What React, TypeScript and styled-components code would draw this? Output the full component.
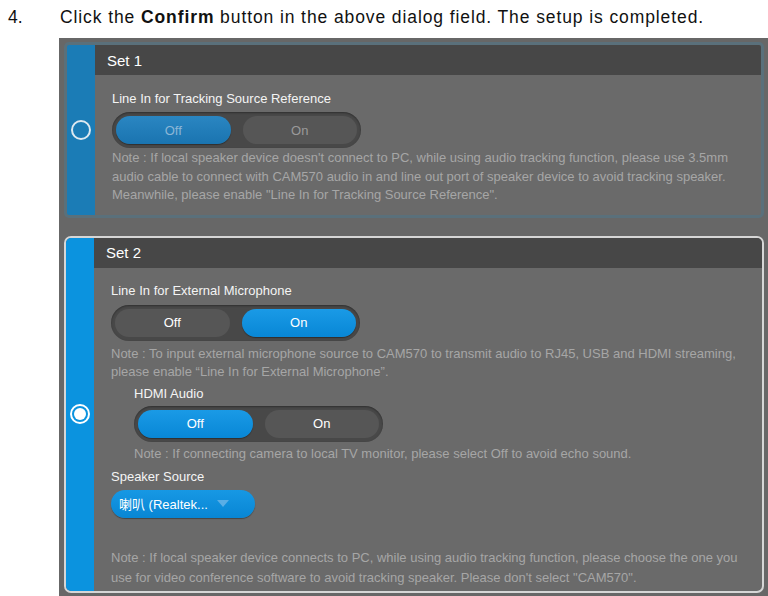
import React from "react";
import styled, { createGlobalStyle } from "styled-components";

const Global = createGlobalStyle`
  html, body { margin: 0; padding: 0; background: #ffffff; }
  body { font-family: "Liberation Sans", Arial, sans-serif; overflow: hidden; width: 768px; height: 596px; }
`;

const Page = styled.div`
  width: 768px;
  height: 596px;
  overflow: hidden;
`;

const StepRow = styled.div`
  display: flex;
  align-items: center;
  height: 20px;
  padding-top: 7px;
  font-size: 17.5px;
  letter-spacing: 0.9px;
  color: #111;
  white-space: nowrap;
`;

const StepNum = styled.span`
  width: 60px;
  padding-left: 8px;
  box-sizing: border-box;
  letter-spacing: 0;
`;

const Frame = styled.div`
  margin-top: 11px;
  margin-left: 59px;
  width: 720px;
  height: 570px;
  background: #676767;
  padding: 4px 0 0 5px;
  box-sizing: border-box;
  display: flex;
  flex-direction: column;
  align-items: flex-start;
  gap: 18px;
`;

const Card = styled.div<{ $active: boolean }>`
  width: 700px;
  display: flex;
  box-sizing: border-box;
  border: ${(p) => (p.$active ? "2px solid #d6d6d6" : "3px solid #5a707b")};
  border-radius: ${(p) => (p.$active ? "7px" : "5px")};
  overflow: hidden;
  background: #6a6a6a;
`;

const Strip = styled.div<{ $active: boolean }>`
  width: 28px;
  flex: none;
  background: ${(p) => (p.$active ? "#0b93df" : "#1b7cb6")};
  display: flex;
  align-items: center;
  justify-content: center;
`;

const Radio = styled.div<{ $checked: boolean }>`
  width: 20px;
  height: 20px;
  box-sizing: border-box;
  border-radius: 50%;
  border: 2px solid ${(p) => (p.$checked ? "#ffffff" : "#dce8f0")};
  display: flex;
  align-items: center;
  justify-content: center;
  &::after {
    content: "";
    display: ${(p) => (p.$checked ? "block" : "none")};
    width: 12px;
    height: 12px;
    border-radius: 50%;
    background: #ffffff;
  }
`;

const Content = styled.div`
  flex: 1;
  display: flex;
  flex-direction: column;
`;

const Header = styled.div`
  height: 30px;
  background: #474747;
  color: #ffffff;
  font-size: 15px;
  display: flex;
  align-items: center;
  padding-left: 12px;
`;

const Body = styled.div<{ $pt: number; $pb: number }>`
  padding: ${(p) => p.$pt}px 10px ${(p) => p.$pb}px 17px;
  display: flex;
  flex-direction: column;
  align-items: flex-start;
`;

const Label = styled.div<{ $indent?: number; $mt?: number }>`
  font-size: 13px;
  line-height: 16px;
  color: #f4f4f4;
  margin-top: ${(p) => p.$mt ?? 0}px;
  margin-left: ${(p) => p.$indent ?? 0}px;
`;

const Toggle = styled.div<{ $indent?: number; $mt: number }>`
  margin-top: ${(p) => p.$mt}px;
  margin-left: ${(p) => p.$indent ?? 0}px;
  width: 249px;
  height: 36px;
  box-sizing: border-box;
  padding: 4px;
  background: #484848;
  border-radius: 18px;
  display: flex;
  gap: 12px;
  box-shadow: inset 0 1px 2px rgba(0, 0, 0, 0.35);
`;

const ToggleBtn = styled.div<{ $on: boolean; $dim?: boolean }>`
  flex: 1;
  border-radius: 14px;
  display: flex;
  align-items: center;
  justify-content: center;
  font-size: 13px;
  background: ${(p) =>
    p.$on
      ? p.$dim
        ? "linear-gradient(#2a86c2, #1a74b0)"
        : "linear-gradient(#1a9ae6, #0887d6)"
      : "#565656"};
  color: ${(p) => (p.$dim ? (p.$on ? "#8cb6d6" : "#9a9a9a") : "#ffffff")};
  box-shadow: ${(p) => (p.$on ? "0 1px 1px rgba(0,0,0,0.35)" : "none")};
`;

const Note = styled.div<{ $indent?: number; $mt: number; $lh: number }>`
  margin-top: ${(p) => p.$mt}px;
  margin-left: ${(p) => p.$indent ?? 0}px;
  font-size: 13px;
  line-height: ${(p) => p.$lh}px;
  color: #a6a6a6;
  white-space: nowrap;
`;

const Select = styled.div`
  margin-top: 5px;
  width: 144px;
  height: 28px;
  box-sizing: border-box;
  border-radius: 14px;
  background: linear-gradient(#1798e4, #0886d4);
  box-shadow: 0 1px 1px rgba(0, 0, 0, 0.35);
  display: flex;
  align-items: center;
  padding-left: 8px;
  gap: 9px;
  color: #ffffff;
  font-size: 13px;
  font-family: "Liberation Sans", "Noto Sans CJK SC", sans-serif;
`;

const Caret = styled.span`
  width: 0;
  height: 0;
  border-left: 6px solid transparent;
  border-right: 6px solid transparent;
  border-top: 7px solid #5aaee6;
`;

export default function App() {
  return (
    <Page>
      <Global />
      <StepRow>
        <StepNum>4.</StepNum>
        <span>
          Click the <b>Confirm</b> button in the above dialog field. The setup is completed.
        </span>
      </StepRow>
      <Frame>
        <Card $active={false}>
          <Strip $active={false}>
            <Radio $checked={false} />
          </Strip>
          <Content>
            <Header>Set 1</Header>
            <Body $pt={16} $pb={10}>
              <Label>Line In for Tracking Source Reference</Label>
              <Toggle $mt={5}>
                <ToggleBtn $on $dim>Off</ToggleBtn>
                <ToggleBtn $on={false} $dim>On</ToggleBtn>
              </Toggle>
              <Note $mt={1} $lh={18.5}>
                Note : If local speaker device doesn't connect to PC, while using audio tracking function, please use 3.5mm
                <br />
                audio cable to connect with CAM570 audio in and line out port of speaker device to avoid tracking speaker.
                <br />
                Meanwhile, please enable "Line In for Tracking Source Reference".
              </Note>
            </Body>
          </Content>
        </Card>
        <Card $active>
          <Strip $active>
            <Radio $checked />
          </Strip>
          <Content>
            <Header>Set 2</Header>
            <Body $pt={15} $pb={3}>
              <Label>Line In for External Microphone</Label>
              <Toggle $mt={6}>
                <ToggleBtn $on={false}>Off</ToggleBtn>
                <ToggleBtn $on>On</ToggleBtn>
              </Toggle>
              <Note $mt={4} $lh={18}>
                Note : To input external microphone source to CAM570 to transmit audio to RJ45, USB and HDMI streaming,
                <br />
                please enable “Line In for External Microphone”.
              </Note>
              <Label $indent={23} $mt={5}>HDMI Audio</Label>
              <Toggle $indent={23} $mt={4}>
                <ToggleBtn $on>Off</ToggleBtn>
                <ToggleBtn $on={false}>On</ToggleBtn>
              </Toggle>
              <Note $indent={23} $mt={3} $lh={18}>
                Note : If connecting camera to local TV monitor, please select Off to avoid echo sound.
              </Note>
              <Label $mt={6}>Speaker Source</Label>
              <Select>
                <span>喇叭 (Realtek...</span>
                <Caret />
              </Select>
              <Note $mt={30} $lh={20}>
                Note : If local speaker device connects to PC, while using audio tracking function, please choose the one you
                <br />
                use for video conference software to avoid tracking speaker. Please don't select "CAM570".
              </Note>
            </Body>
          </Content>
        </Card>
      </Frame>
    </Page>
  );
}
